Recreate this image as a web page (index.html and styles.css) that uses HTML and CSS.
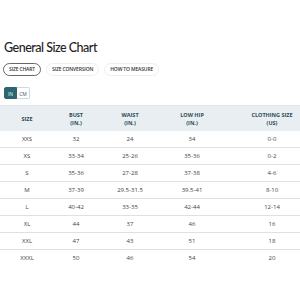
FILE: index.html
```html
<!DOCTYPE html>
<html lang="en">
  <head>
    <meta charset="UTF-8" />
    <meta name="viewport" content="width=device-width, initial-scale=1.0" />
    <title>General Size Chart</title>
    <link rel="stylesheet" href="styles.css">
  </head>
  <body>
    <h1 class="title">General Size Chart</h1>

    <!-- タブ -->
    <div class="tabs">
      <span class="tab active">SIZE CHART</span>
      <span class="tab">SIZE CONVERSION</span>
      <span class="tab">HOW TO MEASURE</span>
    </div>

    <!-- 単位切り替え -->
    <div class="unit-toggle">
      <span class="unit on">IN</span>
      <span class="unit">CM</span>
    </div>

    <div class="table-wrap">
      <table class="size-table">
        <thead>
          <tr>
            <th>SIZE</th>
            <th>BUST<br>(IN.)</th>
            <th>WAIST<br>(IN.)</th>
            <th>LOW HIP<br>(IN.)</th>
            <th>CLOTHING SIZE<br>(US)</th>
          </tr>
        </thead>
        <tbody>
          <tr><td>XXS</td><td>32</td><td>24</td><td>34</td><td>0-0</td></tr>
          <tr><td>XS</td><td>33-34</td><td>25-26</td><td>35-36</td><td>0-2</td></tr>
          <tr><td>S</td><td>35-36</td><td>27-28</td><td>37-38</td><td>4-6</td></tr>
          <tr><td>M</td><td>37-39</td><td>29.5-31.5</td><td>39.5-41</td><td>8-10</td></tr>
          <tr><td>L</td><td>40-42</td><td>33-35</td><td>42-44</td><td>12-14</td></tr>
          <tr><td>XL</td><td>44</td><td>37</td><td>46</td><td>16</td></tr>
          <tr><td>XXL</td><td>47</td><td>43</td><td>51</td><td>18</td></tr>
          <tr><td>XXXL</td><td>50</td><td>46</td><td>54</td><td>20</td></tr>
        </tbody>
      </table>
    </div>
  </body>
</html>
```

FILE: styles.css
```css
html,
body {
  overflow: hidden;
}

body {
  margin: 0;
  font-family: "Open Sans", "Liberation Sans", sans-serif;
  color: #333;
  background: #fff;
}

.title {
  margin: 40px 0 0 4px;
  font-family: "Lato", "Liberation Sans", sans-serif;
  font-size: 12.5px;
  font-weight: 500;
  letter-spacing: -0.5px;
  line-height: 16px;
  color: #222;
}

.tabs {
  display: flex;
  gap: 5px;
  margin: 7px 0 0 3px;
}

.tab {
  font-size: 5px;
  font-weight: 600;
  letter-spacing: -0.15px;
  color: #333;
  padding: 3px 5px;
  border: 1px solid #eee;
  border-radius: 8px;
  line-height: 5px;
}

.tab.active {
  border-color: #666;
}

.unit-toggle {
  display: flex;
  margin: 11px 0 0 4px;
}

.unit {
  font-size: 5px;
  width: 13px;
  height: 12px;
  line-height: 12px;
  text-align: center;
  border: 1px solid #cfd8dc;
  color: #456;
  box-sizing: border-box;
}

.unit.on {
  background: #2d6670;
  border-color: #2d6670;
  color: #cfe;
  border-radius: 2px 0 0 2px;
}

.unit:last-child {
  border-radius: 0 2px 2px 0;
  border-left: none;
}

.table-wrap {
  width: 300px;
  overflow: hidden;
  margin-top: 6px;
}

.size-table {
  width: 322px;
  border-collapse: collapse;
}

.size-table th {
  background: #e9eef2;
  color: #2f4b57;
  font-size: 5.5px;
  font-weight: 700;
  height: 25px;
  padding: 0;
  line-height: 8px;
  border-top: 1px solid #dde4e8;
}

.size-table td {
  text-align: center;
  font-size: 6px;
  color: #444;
  height: 16px;
  padding: 0;
  border-bottom: 1px solid #e0e0e0;
}

.size-table tr:last-child td {
  border-bottom: none;
}

.size-table th:nth-child(1),
.size-table td:nth-child(1) {
  width: 54px;
}

.size-table th:nth-child(2),
.size-table td:nth-child(2) {
  width: 44px;
}

.size-table th:nth-child(3),
.size-table td:nth-child(3) {
  width: 64px;
}

.size-table th:nth-child(4),
.size-table td:nth-child(4) {
  width: 60px;
}
```
